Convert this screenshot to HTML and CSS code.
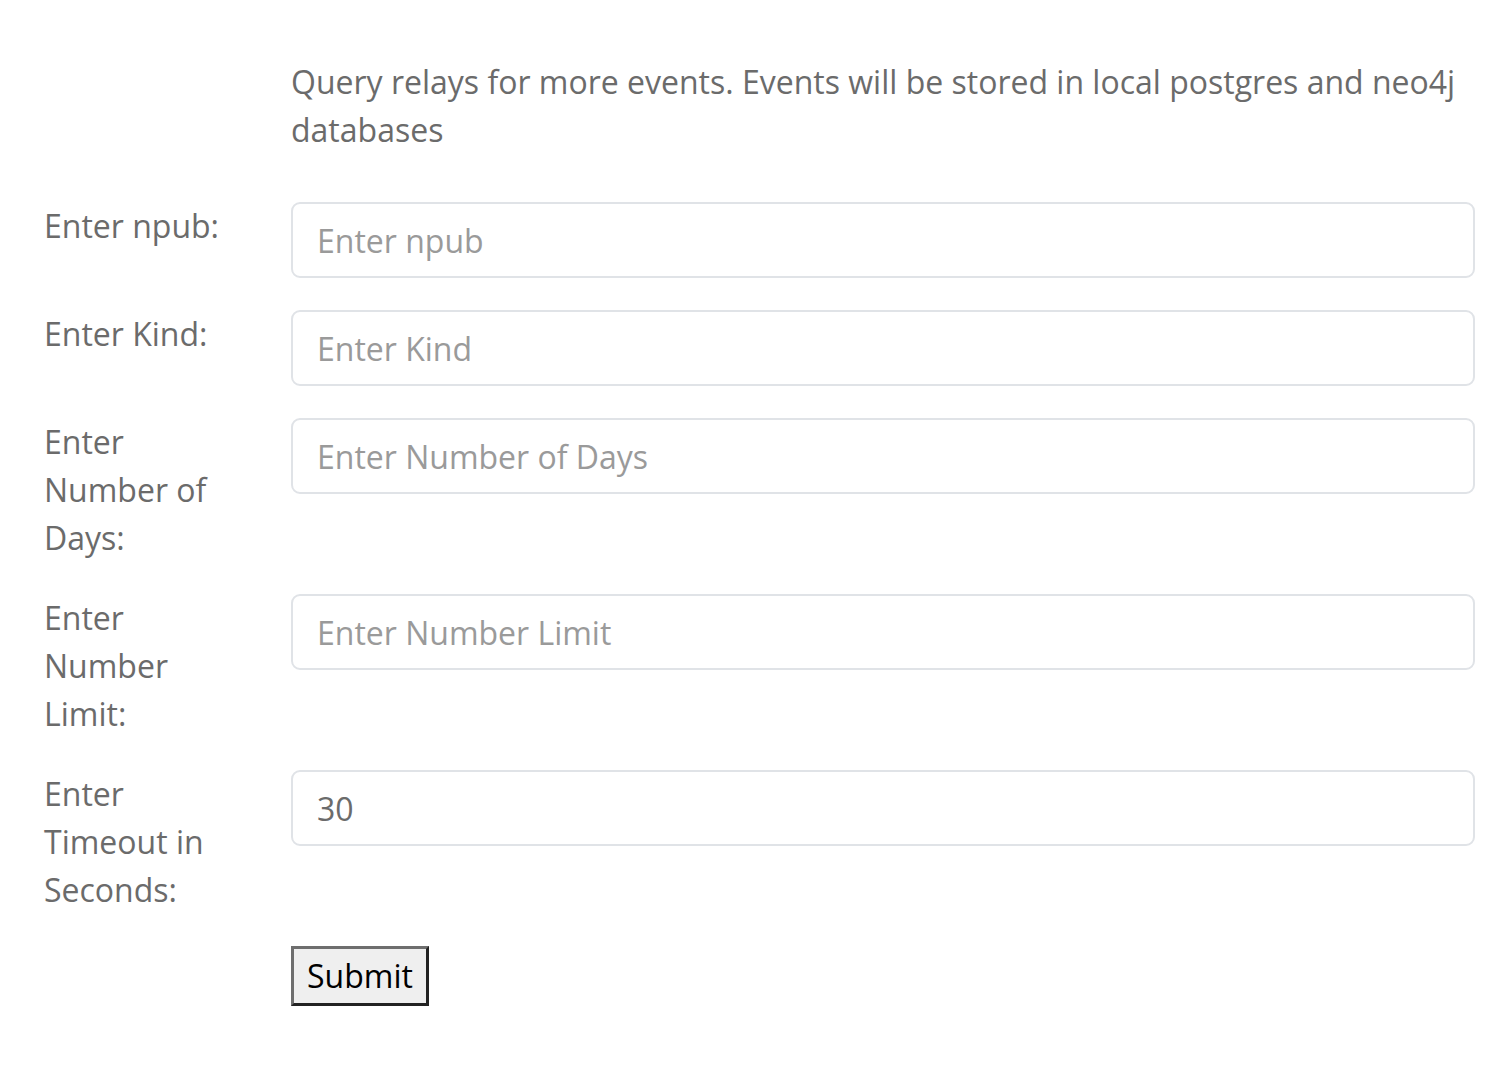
FILE: index.html
```html
<!DOCTYPE html>
<html>
<head>
<meta charset="utf-8">
<link rel="stylesheet" href="styles.css">
</head>
<body>
<div class="page">
  <div class="row">
    <div class="label"></div>
    <p class="desc">Query relays for more events. Events will be stored in local postgres and neo4j databases</p>
  </div>
  <div class="form">
    <div class="row">
      <label class="label">Enter npub:</label>
      <input class="field" type="text" placeholder="Enter npub">
    </div>
    <div class="row">
      <label class="label">Enter Kind:</label>
      <input class="field" type="text" placeholder="Enter Kind">
    </div>
    <div class="row">
      <label class="label">Enter Number of Days:</label>
      <input class="field" type="text" placeholder="Enter Number of Days">
    </div>
    <div class="row">
      <label class="label">Enter Number Limit:</label>
      <input class="field" type="text" placeholder="Enter Number Limit">
    </div>
    <div class="row">
      <label class="label">Enter Timeout in Seconds:</label>
      <input class="field" type="text" value="30">
    </div>
    <div class="row">
      <div class="label"></div>
      <div><button class="submit" type="button">Submit</button></div>
    </div>
  </div>
</div>
</body>
</html>
```

FILE: styles.css
```css
html, body {
  margin: 0;
  padding: 0;
  background: #ffffff;
}
.page {
  padding: 58px 37px 0 44px;
  font-family: "Open Sans", sans-serif;
  font-size: 32px;
  line-height: 48px;
  color: #6b6b6b;
}
.row {
  display: flex;
  align-items: flex-start;
  gap: 42px;
}
.label {
  flex: 0 0 205px;
  width: 205px;
}
.desc {
  flex: 1;
  margin: 0 0 48px 0;
}
.form {
  display: flex;
  flex-direction: column;
  gap: 32px;
}
.field {
  flex: 1;
  box-sizing: border-box;
  height: 76px;
  margin: 0;
  padding: 0 24px;
  border: 2px solid #e0e3e7;
  border-radius: 9px;
  font-family: "Open Sans", sans-serif;
  font-size: 32px;
  color: #6b6b6b;
  background: #fff;
  outline: none;
}
.field::placeholder {
  color: #9a9a9a;
}
.submit {
  box-sizing: border-box;
  height: 60px;
  padding: 0 13px;
  margin: 0;
  border: 3px solid;
  border-color: #6e6e6e #222 #222 #6e6e6e;
  background: #efefef;
  color: #000;
  font-family: "Open Sans", sans-serif;
  font-size: 32px;
  line-height: 1;
}
```
